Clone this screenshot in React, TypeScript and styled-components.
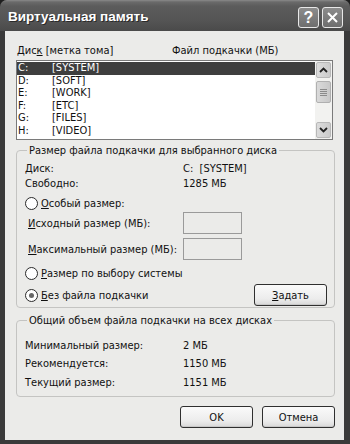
import React from "react";
import styled, { createGlobalStyle } from "styled-components";

const Global = createGlobalStyle`
  html, body { margin: 0; padding: 0; background: #1e1e1e; }
  body { width: 350px; height: 444px; overflow: hidden; }
  * { box-sizing: border-box; }
`;

const FONT = `"DejaVu Sans Condensed", "DejaVu Sans", sans-serif`;

const Window = styled.div`
  width: 350px;
  height: 444px;
  display: flex;
  flex-direction: column;
  background: #3a3a3a;
  border-radius: 7px 7px 0 0;
  overflow: hidden;
  font-family: ${FONT};
  font-size: 11px;
  color: #111;
`;

const TitleBar = styled.div`
  height: 31px;
  flex: none;
  display: flex;
  align-items: center;
  padding: 0 7px 0 8px;
  background: linear-gradient(#8a8a8a 0px, #6a6a6a 2px, #5c5c5c 6px, #555 20px, #4a4a4a 31px);
`;

const Title = styled.div`
  flex: 1;
  color: #fff;
  font-family: "Liberation Sans", Arial, sans-serif;
  font-weight: bold;
  font-size: 13.5px;
  padding-top: 2px;
  text-shadow: 1px 1px 0 #2a2a2a;
`;

const TitleButtons = styled.div`
  display: flex;
  gap: 3px;
  padding-top: 4px;
`;

const TitleButton = styled.div`
  width: 21px;
  height: 21px;
  border: 1px solid #e8e8e8;
  border-radius: 3px;
  background: linear-gradient(#8c8c8c, #6e6e6e);
  display: flex;
  align-items: center;
  justify-content: center;
  color: #fff;
  font-family: "Liberation Sans", sans-serif;
  font-weight: bold;
  font-size: 16px;
`;

const Frame = styled.div`
  flex: 1;
  display: flex;
  padding: 0 6px 4px 5px;
  background: #3a3a3a;
`;

const Body = styled.div`
  flex: 1;
  background: #ebebe9;
  padding: 13px 9px 0 11px;
  display: flex;
  flex-direction: column;
`;

const ListHeader = styled.div`
  display: grid;
  grid-template-columns: 155px 1fr;
  height: 13px;
  line-height: 13px;
  padding-left: 1px;
`;

const ListBox = styled.div`
  margin: 3px 2px 0 0;
  height: 80px;
  border: 1px solid #7a7a7a;
  background: #fff;
  display: flex;
`;

const Rows = styled.div`
  flex: 1;
  padding: 1px 0 0 0;
`;

const Row = styled.div<{ $sel?: boolean }>`
  display: grid;
  grid-template-columns: 34px 1fr;
  height: 12.6px;
  line-height: 12.6px;
  padding-left: 1px;
  background: ${(p) => (p.$sel ? "#3e3e3e" : "transparent")};
  color: ${(p) => (p.$sel ? "#fff" : "#111")};
`;

const Scroll = styled.div`
  width: 17px;
  flex: none;
  background: #f2f2f0;
  display: flex;
  flex-direction: column;
  padding: 1px 0;
`;

const ScrollBtn = styled.div`
  height: 16px;
  margin: 0 1px;
  border: 1px solid #b8b8b8;
  border-radius: 2px;
  background: linear-gradient(90deg, #dcdcdc, #cbcbcb);
  display: flex;
  align-items: center;
  justify-content: center;
`;

const Thumb = styled.div`
  height: 22px;
  margin: 3px 1px 0;
  border: 1px solid #b0b0b0;
  border-radius: 2px;
  background: linear-gradient(90deg, #dadada, #c8c8c8);
  display: flex;
  flex-direction: column;
  align-items: center;
  justify-content: center;
  gap: 1px;
`;

const Grip = styled.div`
  width: 7px;
  height: 1px;
  background: #8a8a8a;
`;

const Track = styled.div`
  flex: 1;
`;

const Spacer = styled.div<{ $h: number }>`
  height: ${(p) => p.$h}px;
  flex: none;
`;

const Group = styled.fieldset<{ $h: number }>`
  margin: 0;
  height: ${(p) => p.$h}px;
  border: 1px solid #c4c4c2;
  border-radius: 4px;
  padding: 4px 7px 0 8px;
  min-width: 0;
`;

const Legend = styled.legend`
  padding: 0 2px;
  margin-left: 2px;
  line-height: 13px;
`;

const InfoGrid = styled.div<{ $rowH: number; $top?: number }>`
  display: grid;
  grid-template-columns: 158px 1fr;
  grid-auto-rows: ${(p) => p.$rowH}px;
  align-items: center;
  margin-top: ${(p) => p.$top ?? 0}px;
`;

const Radio = styled.div<{ $h: number; $top?: number }>`
  display: flex;
  align-items: center;
  gap: 3px;
  height: ${(p) => p.$h}px;
  margin-top: ${(p) => p.$top ?? 0}px;
`;

const RadioCircle = styled.div<{ $on?: boolean }>`
  width: 13px;
  height: 13px;
  border-radius: 50%;
  border: 1px solid #2a2a2a;
  background: #fff;
  display: flex;
  align-items: center;
  justify-content: center;
  &::after {
    content: "";
    display: ${(p) => (p.$on ? "block" : "none")};
    width: 5px;
    height: 5px;
    border-radius: 50%;
    background: #666;
  }
`;

const FieldRow = styled.div`
  display: grid;
  grid-template-columns: 155px 59px;
  align-items: center;
  height: 26px;
  padding-left: 3px;
`;

const Input = styled.div`
  height: 22px;
  border: 1px solid #9a9a9a;
  background: #ebebe9;
`;

const SetRow = styled.div`
  display: flex;
  align-items: center;
  justify-content: space-between;
`;

const Btn = styled.div`
  width: 73px;
  height: 22px;
  border: 1px solid #2f2f2f;
  border-radius: 3px;
  background: linear-gradient(#fafafa, #ececec 70%, #d8d8d8);
  box-shadow: inset 0 -1px 0 #c8c8c8;
  display: flex;
  align-items: center;
  justify-content: center;
`;

const Footer = styled.div`
  display: flex;
  justify-content: flex-end;
  gap: 9px;
  margin-top: 9px;
`;

const U = styled.span`
  text-decoration: underline;
  text-underline-offset: 1px;
`;

const Arrow = ({ up }: { up?: boolean }) => (
  <svg width="9" height="6" viewBox="0 0 9 6">
    <path
      d={up ? "M1 5 L4.5 1.5 L8 5" : "M1 1 L4.5 4.5 L8 1"}
      fill="none"
      stroke="#222"
      strokeWidth="1.8"
    />
  </svg>
);

const drives = [
  ["C:", "[SYSTEM]"],
  ["D:", "[SOFT]"],
  ["E:", "[WORK]"],
  ["F:", "[ETC]"],
  ["G:", "[FILES]"],
  ["H:", "[VIDEO]"],
];

export default function App() {
  return (
    <>
      <Global />
      <Window>
        <TitleBar>
          <Title>Виртуальная память</Title>
          <TitleButtons>
            <TitleButton>?</TitleButton>
            <TitleButton>
              <svg width="13" height="13" viewBox="0 0 13 13">
                <path d="M2 2 L11 11 M11 2 L2 11" stroke="#fff" strokeWidth="2" />
              </svg>
            </TitleButton>
          </TitleButtons>
        </TitleBar>
        <Frame>
          <Body>
            <ListHeader>
              <span>
                Дис<U>к</U> [метка тома]
              </span>
              <span>Файл подкачки (МБ)</span>
            </ListHeader>
            <ListBox>
              <Rows>
                {drives.map(([d, l], i) => (
                  <Row key={d} $sel={i === 0}>
                    <span>{d}</span>
                    <span>{l}</span>
                  </Row>
                ))}
              </Rows>
              <Scroll>
                <ScrollBtn>
                  <Arrow up />
                </ScrollBtn>
                <Thumb>
                  <Grip />
                  <Grip />
                  <Grip />
                  <Grip />
                </Thumb>
                <Track />
                <ScrollBtn>
                  <Arrow />
                </ScrollBtn>
              </Scroll>
            </ListBox>
            <Spacer $h={4} />
            <Group $h={164}>
              <Legend>Размер файла подкачки для выбранного диска</Legend>
              <InfoGrid $rowH={15}>
                <span>Диск:</span>
                <span>C:&nbsp;&nbsp;[SYSTEM]</span>
                <span>Свободно:</span>
                <span>1285 МБ</span>
              </InfoGrid>
              <Radio $h={14} $top={5}>
                <RadioCircle />
                <span>
                  <U>О</U>собый размер:
                </span>
              </Radio>
              <FieldRow>
                <span>
                  <U>И</U>сходный размер (МБ):
                </span>
                <Input />
              </FieldRow>
              <FieldRow>
                <span>
                  <U>М</U>аксимальный размер (МБ):
                </span>
                <Input />
              </FieldRow>
              <Radio $h={22}>
                <RadioCircle />
                <span>
                  <U>Р</U>азмер по выбору системы
                </span>
              </Radio>
              <SetRow>
                <Radio $h={20}>
                  <RadioCircle $on />
                  <span>
                    <U>Б</U>ез файла подкачки
                  </span>
                </Radio>
                <Btn>
                  <span>
                    <U>З</U>адать
                  </span>
                </Btn>
              </SetRow>
            </Group>
            <Spacer $h={6} />
            <Group $h={83}>
              <Legend>Общий объем файла подкачки на всех дисках</Legend>
              <InfoGrid $rowH={18.5} $top={5}>
                <span>Минимальный размер:</span>
                <span>2 МБ</span>
                <span>Рекомендуется:</span>
                <span>1150 МБ</span>
                <span>Текущий размер:</span>
                <span>1151 МБ</span>
              </InfoGrid>
            </Group>
            <Footer>
              <Btn>OK</Btn>
              <Btn>Отмена</Btn>
            </Footer>
          </Body>
        </Frame>
      </Window>
    </>
  );
}
